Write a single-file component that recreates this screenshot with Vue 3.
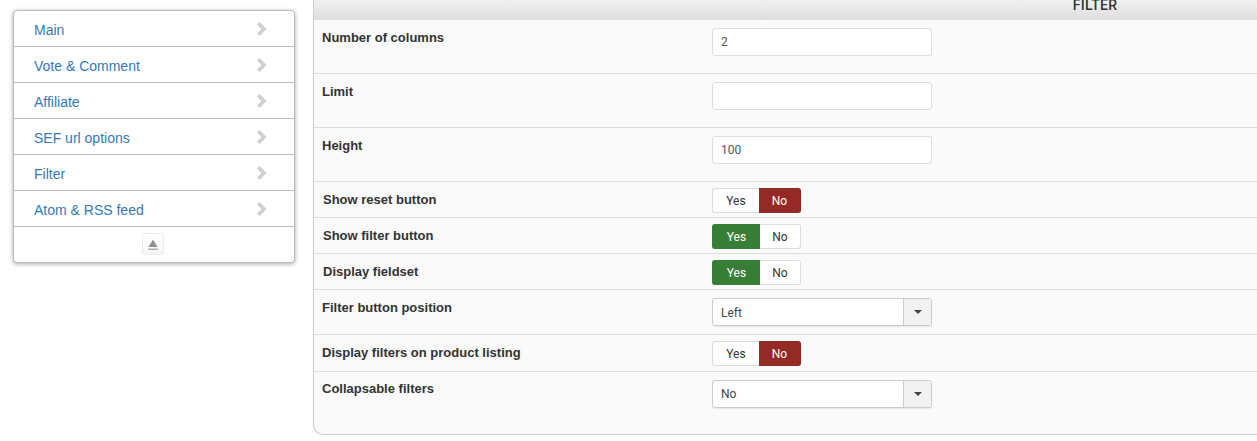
<script setup>
const menu = ['Main', 'Vote & Comment', 'Affiliate', 'SEF url options', 'Filter', 'Atom & RSS feed']
const rows = [
  { label: 'Number of columns', type: 'input', value: '2', cls: 'tall' },
  { label: 'Limit', type: 'input', value: '', cls: 'tall' },
  { label: 'Height', type: 'input', value: '100', cls: 'tall' },
  { label: 'Show reset button', type: 'toggle', on: false, cls: 'short nudge' },
  { label: 'Show filter button', type: 'toggle', on: true, cls: 'short nudge' },
  { label: 'Display fieldset', type: 'toggle', on: true, cls: 'short nudge' },
  { label: 'Filter button position', type: 'select', value: 'Left', cls: 'mid' },
  { label: 'Display filters on product listing', type: 'toggle', on: false, cls: 'short wide' },
  { label: 'Collapsable filters', type: 'select', value: 'No', cls: 'last' },
]
</script>

<template>
  <div class="page">
    <aside class="side">
      <a v-for="item in menu" :key="item" class="side-item">
        <span>{{ item }}</span>
        <svg class="chev" width="12" height="16" viewBox="0 0 12 16">
          <path d="M1 3.6 3.6 1 10.6 8 3.6 15 1 12.4 5.4 8Z" fill="#d0d0d0" />
        </svg>
      </a>
      <div class="side-foot">
        <span class="collapse">
          <svg width="12" height="13" viewBox="0 0 12 13">
            <path d="M6 1.5 10.5 9H1.5Z" fill="#8f8f8f" />
            <rect x="1" y="10.5" width="10" height="1.5" fill="#b0b0b0" />
          </svg>
        </span>
      </div>
    </aside>
    <main class="panel">
      <header class="head"><span>FILTER</span></header>
      <div v-for="row in rows" :key="row.label" class="row" :class="row.cls">
        <label class="lab">{{ row.label }}</label>
        <input v-if="row.type === 'input'" class="field" type="text" :value="row.value" />
        <div v-else-if="row.type === 'toggle'" class="toggle">
          <span class="opt yes" :class="{ green: row.on }">Yes</span>
          <span class="opt no" :class="{ red: !row.on }">No</span>
        </div>
        <div v-else class="select">
          <span class="sel-val">{{ row.value }}</span>
          <span class="sel-btn"><i class="caret"></i></span>
        </div>
      </div>
    </main>
  </div>
</template>

<style>
html, body { margin: 0; background: #fff; overflow: hidden; }
</style>

<style scoped>
.page {
  width: 1257px;
  height: 441px;
  overflow: hidden;
  display: flex;
  align-items: flex-start;
  font-family: "Liberation Sans", Arial, sans-serif;
  color: #333;
}
.side {
  box-sizing: border-box;
  flex: none;
  width: 282px;
  height: 253px;
  margin: 10px 0 0 13px;
  border: 1px solid #bbb;
  border-radius: 4px;
  background: #fff;
  box-shadow: 0 1px 4px rgba(0, 0, 0, .35);
}
.side-item {
  box-sizing: border-box;
  height: 36px;
  display: flex;
  align-items: center;
  justify-content: space-between;
  padding: 2px 26px 0 20px;
  border-bottom: 1px solid #bbb;
  color: #337ab7;
  font-size: 14px;
}
.chev { margin-top: -1px; }
.side-foot {
  display: flex;
  justify-content: center;
  padding: 6px 2px 0 0;
}
.collapse {
  box-sizing: border-box;
  width: 22px;
  height: 22px;
  display: flex;
  align-items: center;
  justify-content: center;
  border: 1px solid #ececec;
  border-radius: 3px;
  background: linear-gradient(#fff 55%, #f3f3f3);
}
.panel {
  box-sizing: border-box;
  flex: none;
  width: 1564px;
  height: 435px;
  margin-left: 18px;
  border: 1px solid #ccc;
  border-top: 0;
  border-radius: 0 0 10px 10px;
  background: #fafafa;
}
.head {
  height: 20px;
  background: linear-gradient(#f0f0f0, #dedede);
  text-align: center;
  font: 500 14px/11px Roboto, sans-serif;
  letter-spacing: .3px;
  color: #333;
  overflow: hidden;
}
.row {
  box-sizing: border-box;
  display: flex;
  align-items: flex-start;
  padding-left: 8px;
  border-bottom: 1px solid #ddd;
}
.tall { height: 54px; padding-top: 8px; }
.short { height: 36px; padding-top: 6px; }
.wide { height: 37px; }
.mid { height: 45px; padding-top: 8px; }
.last { border-bottom: 0; padding-top: 8px; }
.lab {
  flex: none;
  width: 390px;
  font-size: 13px;
  font-weight: 700;
  line-height: 20px;
  color: #333;
}
.nudge .lab { padding-left: 1px; width: 389px; line-height: 23px; }
.wide .lab { line-height: 23px; }
.last .lab { line-height: 18px; }
.field {
  box-sizing: border-box;
  width: 220px;
  height: 28px;
  padding: 0 8px;
  border: 1px solid #ddd;
  border-radius: 3px;
  background: #fff;
  font: 12px Roboto, sans-serif;
  color: #555;
  outline: 0;
}
.toggle {
  box-sizing: border-box;
  width: 89px;
  height: 25px;
  display: flex;
  font: 12px/24px Roboto, sans-serif;
  color: #333;
}
.opt {
  box-sizing: border-box;
  height: 25px;
  text-align: center;
  background: #fff;
  border: 1px solid #ddd;
}
.yes { width: 47px; border-radius: 3px 0 0 3px; border-right: 0; }
.no { flex: 1; border-radius: 0 3px 3px 0; border-left: 0; }
.green { width: 48px; background: #377e37; border-color: #377e37; color: #fff; }
.red { background: #942a25; border-color: #942a25; color: #fff; }
.select {
  box-sizing: border-box;
  width: 220px;
  height: 28px;
  display: flex;
  border: 1px solid #ccc;
  border-radius: 3px;
  background: #fff;
  box-shadow: 0 1px 1px rgba(0, 0, 0, .08);
  font: 12px/26px Roboto, sans-serif;
  color: #444;
}
.mid .select { line-height: 28px; }
.sel-val { flex: 1; padding-left: 8px; }
.sel-btn {
  box-sizing: border-box;
  width: 28px;
  display: flex;
  align-items: center;
  justify-content: center;
  border-left: 1px solid #ccc;
  border-radius: 0 2px 2px 0;
  background: #f2f2f2;
}
.caret {
  width: 0;
  height: 0;
  border: 4px solid transparent;
  border-top-color: #444;
  border-bottom: 0;
}
</style>
